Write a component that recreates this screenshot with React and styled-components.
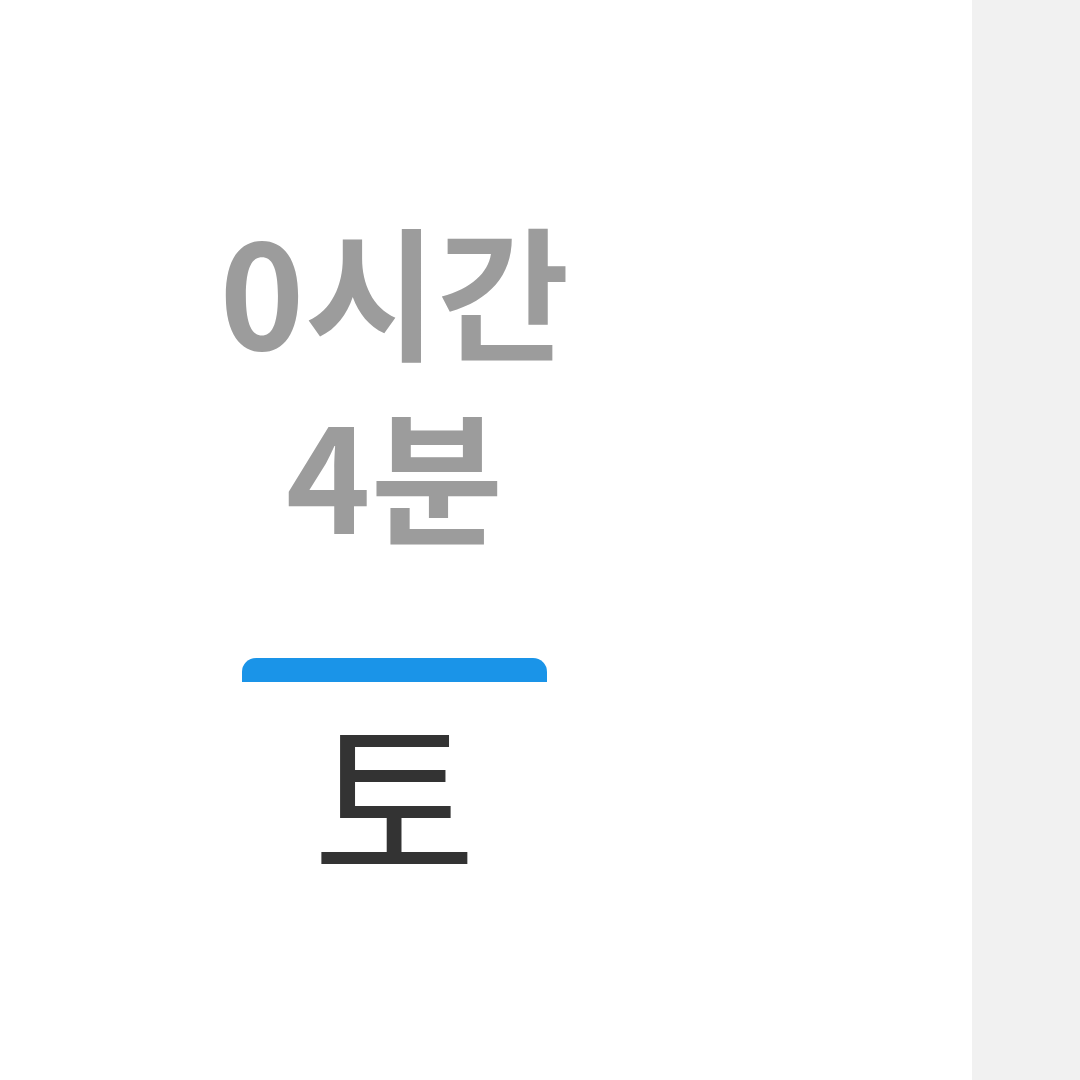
import React from "react"
import styled, { createGlobalStyle } from "styled-components"

const GlobalStyle = createGlobalStyle`
  html, body {
    margin: 0;
    padding: 0;
    background: #ffffff;
  }
  body {
    font-family: "Noto Sans CJK KR", "Noto Sans", sans-serif;
  }
`

const Screen = styled.div`
  display: flex;
  width: 1080px;
  height: 1080px;
  overflow: hidden;
`

const Chart = styled.div`
  flex: 0 0 972px;
  background: #ffffff;
  padding: 195px 0 0 242px;
  box-sizing: border-box;
`

const SidePanel = styled.div`
  flex: 1;
  background: #f1f1f1;
`

const DayColumn = styled.div`
  width: 305px;
  display: flex;
  flex-direction: column;
  align-items: center;
`

const Duration = styled.div`
  font-size: 144px;
  line-height: 184px;
  font-weight: 700;
  color: #9c9c9c;
  text-align: center;
  white-space: nowrap;
`

const Bar = styled.div`
  align-self: stretch;
  height: 24px;
  margin-top: 95px;
  background: #1a94e8;
  border-radius: 14px 14px 0 0;
`

const DayLabel = styled.div`
  margin-top: 19px;
  font-size: 178px;
  line-height: 184px;
  font-weight: 400;
  color: #333333;
  text-align: center;
`

export default function App() {
  return (
    <>
      <GlobalStyle />
      <Screen>
        <Chart>
          <DayColumn>
            <Duration>
              0시간
              <br />
              4분
            </Duration>
            <Bar />
            <DayLabel>토</DayLabel>
          </DayColumn>
        </Chart>
        <SidePanel />
      </Screen>
    </>
  )
}
